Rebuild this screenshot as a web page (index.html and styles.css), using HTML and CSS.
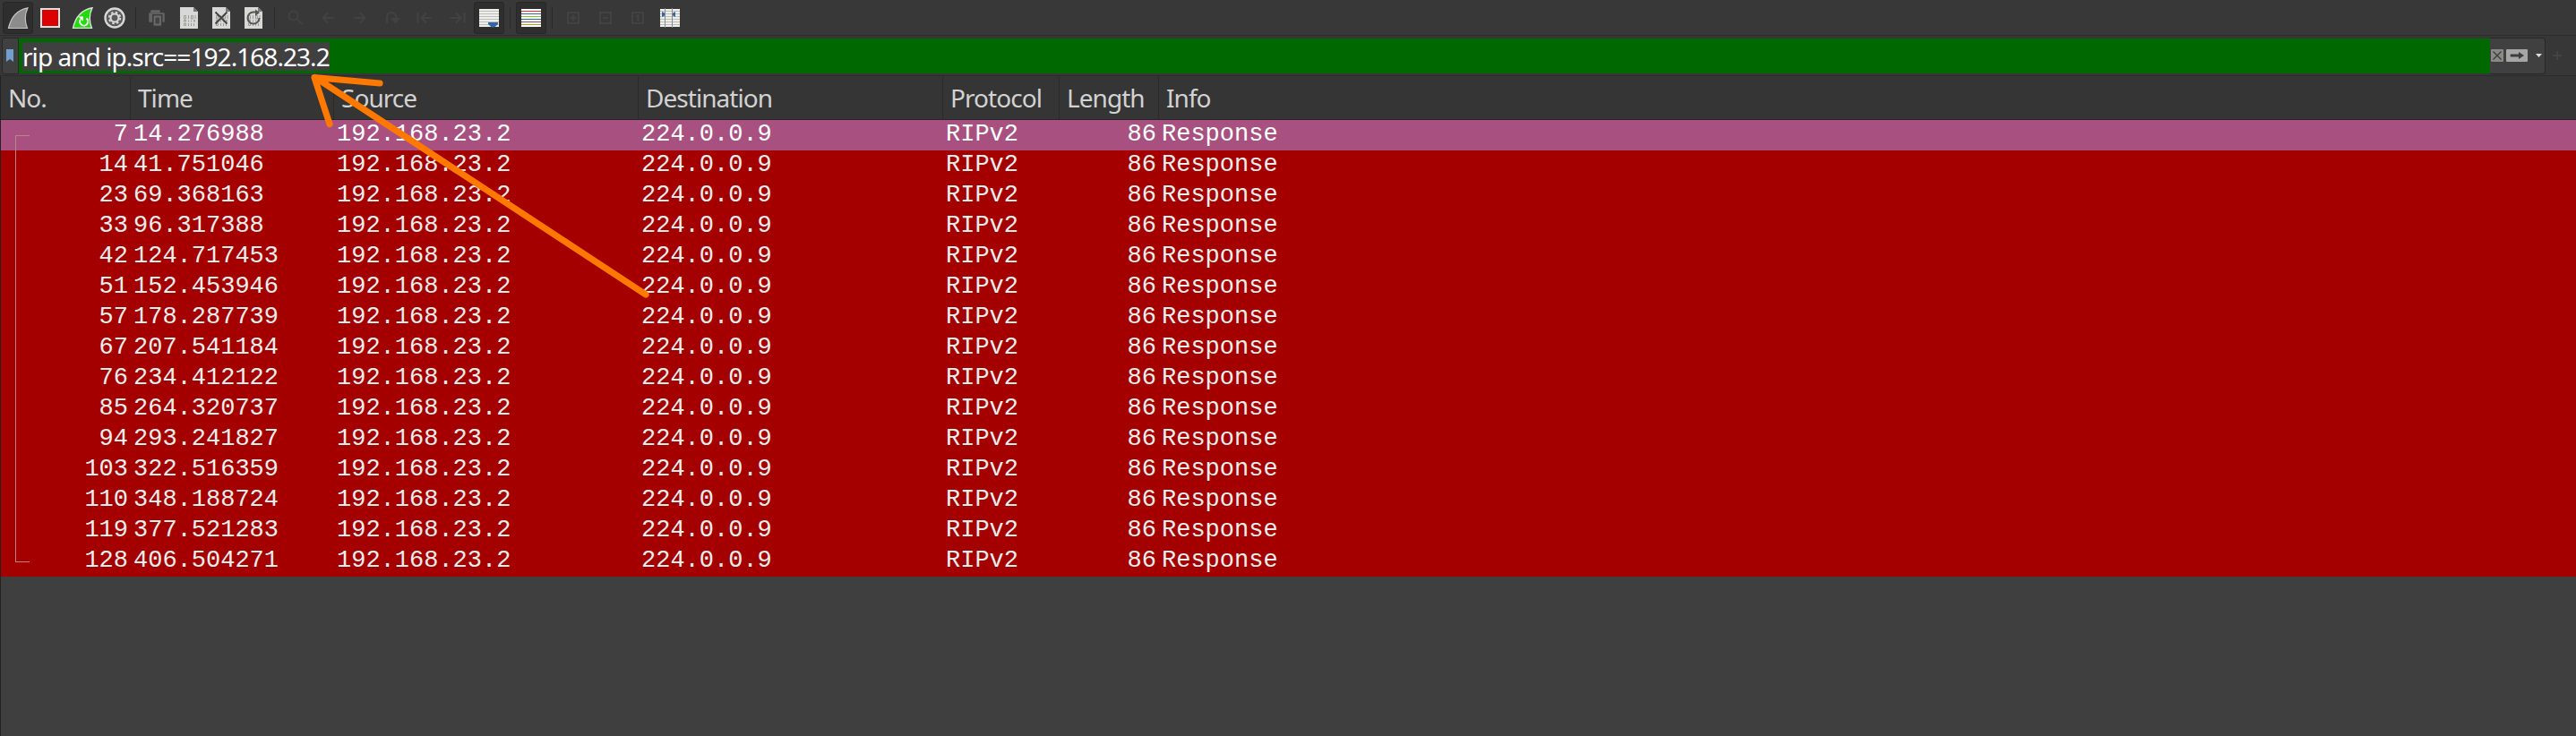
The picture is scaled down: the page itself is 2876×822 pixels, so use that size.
FILE: index.html
```
<!DOCTYPE html>
<html lang="en">
<head>
<meta charset="utf-8">
<title>Packet capture</title>
<link rel="stylesheet" href="styles.css">
</head>
<body>
<svg class="defs" width="0" height="0" aria-hidden="true">
  <symbol id="page" viewBox="0 0 24 24">
    <path d="M2 0H17L22 5V24H2Z" fill="#d8d8d6"/>
    <path d="M17 0V5H22Z" fill="#777"/>
    <g fill="none" stroke="#9b9b99" stroke-width="1">
      <path d="M6.500 9.500h2v3.500h-2zM14.500 9.500h2v3.500h-2zM6.500 14.500h2v1.500h-2zM6.500 18h2v2.500h-2zM17.500 14.500h1v1.500h-1z"/>
      <path d="M11.500 9v4M19 9v4M11.500 14.500v2M14.500 14.500v2M11.500 18v3M14.500 18v3M17.500 18v3"/>
    </g>
  </symbol>
  <symbol id="sheet" viewBox="0 0 24 24">
    <path d="M1 2H23V22H1Z" fill="#eeeeec"/>
    <path d="M1 4.500H23M1 7.500H23M1 10.500H23M1 13.500H23M1 16.500H23M1 19.500H23" stroke="#babdb6"/>
  </symbol>
</svg>
<div class="window">
  <div class="toolbar">
    <span class="btn on"><svg viewBox="0 0 24 24"><path d="M1.500 23.500C4 12 11 3 23 .8C19.500 8 19.500 16 22.500 23.500Z" fill="#8c8c8c" stroke="#c4c4c4" stroke-width="1.200"/></svg></span>
    <span class="btn"><svg viewBox="0 0 24 24"><path d="M1 1H23V23H1Z" fill="#e4e4e4"/><path d="M3 3H21V21H3Z" fill="#dc0000"/></svg></span>
    <span class="btn"><svg viewBox="0 0 24 24"><path d="M1.500 23.500C4 12 11 3 23 .8C19.500 8 19.500 16 22.500 23.500Z" fill="#1fdc0a" stroke="#dedede" stroke-width="1.400"/><path d="M16.500 12.500A4.500 4.500 0 1 1 10 13.500" fill="none" stroke="#fff" stroke-width="2"/><path d="M7.500 10.500H13V16Z" fill="#fff"/></svg></span>
    <span class="btn"><svg viewBox="0 0 24 24"><circle cx="12" cy="12" r="11.700" fill="#d8d8d8"/><circle cx="12" cy="12" r="9.300" fill="#5a5a5a"/><circle cx="12" cy="12" r="6.300" fill="none" stroke="#d8d8d8" stroke-width="1.800" stroke-dasharray="2.600 2.348"/><circle cx="12" cy="12" r="4.500" fill="none" stroke="#d8d8d8" stroke-width="2.200"/></svg></span>
    <span class="sep"></span>
    <span class="btn"><svg viewBox="0 0 24 24"><path d="M6 6V4H15V6M4 7H20V16H4Z" fill="#646464" stroke="#646464" stroke-width="1.500" stroke-linejoin="round"/><path d="M9 10H16.500V20H9Z" fill="#646464" stroke="#3b3b3b" stroke-width="4"/><path d="M9.500 10.500H16V19.500H9.500Z" fill="#444" stroke="#6c6c6c" stroke-width="1.800"/></svg></span>
    <span class="btn"><svg><use href="#page"/></svg></span>
    <span class="btn"><svg viewBox="0 0 24 24"><use href="#page"/><path d="M5.500 5.500L18.500 18.500M18.500 5.500L5.500 18.500" stroke="#444" stroke-width="2"/></svg></span>
    <span class="btn"><svg viewBox="0 0 24 24"><use href="#page"/><path d="M18.500 12A6.500 6.500 0 1 1 12 5.500H16" fill="none" stroke="#555" stroke-width="2"/><path d="M14 2.500L19 6L14 10Z" fill="#555"/></svg></span>
    <span class="sep"></span>
    <span class="btn dim"><svg viewBox="0 0 24 24"><circle cx="9.500" cy="9.500" r="5" /><path d="M13.500 13.500L19.500 19"/></svg></span>
    <span class="btn dim"><svg viewBox="0 0 24 24"><path d="M18.500 12H6.500M12 6.500L6.500 12L12 17.500"/></svg></span>
    <span class="btn dim"><svg viewBox="0 0 24 24"><path d="M5.500 12H17.500M12 6.500L17.500 12L12 17.500"/></svg></span>
    <span class="btn dim"><svg viewBox="0 0 24 24"><path d="M6 18V11A5 5 0 0 1 16 11V14"/><path class="solid" d="M12 13H19L15.500 17Z"/></svg></span>
    <span class="btn dim"><svg viewBox="0 0 24 24"><path d="M4.500 6V17.500M19.500 12H8.500M14 6.500L8.500 12L14 17.500"/></svg></span>
    <span class="btn dim"><svg viewBox="0 0 24 24"><path d="M20.500 6V17.500M4.500 12H16M11 6.500L16.500 12L11 17.500"/></svg></span>
    <span class="btn on"><svg viewBox="0 0 24 24"><use href="#sheet"/><path d="M11 17H22V19L18 22.500H15L11 19Z" fill="#3465a4"/></svg></span>
    <span class="sep"></span>
    <span class="btn on"><svg viewBox="0 0 24 24"><path d="M1 2H23V22H1Z" fill="#fff"/><path d="M1 4.500H23" stroke="#ef2929"/><path d="M1 7.500H23M1 13.500H23" stroke="#3465a4"/><path d="M1 10.500H23" stroke="#73d216"/><path d="M1 16.500H23" stroke="#75507b"/><path d="M1 19.500H23" stroke="#c4a000"/></svg></span>
    <span class="sep"></span>
    <span class="btn dim"><svg viewBox="0 0 24 24"><path d="M6 6H18V18H6ZM8.500 12H15.500M12 8.500V15.500"/></svg></span>
    <span class="btn dim"><svg viewBox="0 0 24 24"><path d="M6 6H18V18H6ZM9 12H15"/></svg></span>
    <span class="btn dim"><svg viewBox="0 0 24 24"><path d="M6 6H18V18H6ZM10 10L12.500 9V16"/></svg></span>
    <span class="btn"><svg viewBox="0 0 24 24"><use href="#sheet"/><path d="M3 5L7 7V9L3 11ZM18 5V11L14.500 9V7Z" fill="#3465a4"/><path d="M6.500 1V23M14.500 1V23" stroke="#888a85"/></svg></span>
  </div>

  <div class="filter">
    <div class="bookmark"><svg viewBox="0 0 8 14"><path d="M0 0H8V14L4 11L0 14Z" fill="#729fcf"/></svg></div>
    <div class="field"><span class="query">rip and ip.src==192.168.23.2</span></div>
    <div class="actions">
      <svg class="clear" viewBox="0 0 14 14"><rect width="14" height="14" rx="1" fill="#888a85"/><path d="M2.500 2.500L11.500 11.500M11.500 2.500L2.500 11.500" stroke="#3c3c3c" stroke-width="1.300"/></svg>
      <svg class="apply" viewBox="0 0 24 14"><rect width="24" height="14" rx="1" fill="#a6a6a6"/><path d="M5 5.500H14V3L20 7L14 11V8.500H5Q4 7 5 5.500Z" fill="#3c3c3c"/></svg>
      <svg class="drop" viewBox="0 0 7 4"><path d="M0 0H7L3.500 4Z" fill="#dededa"/></svg>
    </div>
    <svg class="plus" viewBox="0 0 10 10"><path d="M5 0V10M0 5H10" stroke="#484848" stroke-width="1.500"/></svg>
  </div>

  <div class="packets">
    <div class="row head">
      <span>No.</span><span>Time</span><span>Source</span><span>Destination</span><span>Protocol</span><span>Length</span><span>Info</span>
    </div>
    <div class="row selected"><span>7</span><span>14.276988</span><span>192.168.23.2</span><span>224.0.0.9</span><span>RIPv2</span><span>86</span><span>Response</span></div>
    <div class="row"><span>14</span><span>41.751046</span><span>192.168.23.2</span><span>224.0.0.9</span><span>RIPv2</span><span>86</span><span>Response</span></div>
    <div class="row"><span>23</span><span>69.368163</span><span>192.168.23.2</span><span>224.0.0.9</span><span>RIPv2</span><span>86</span><span>Response</span></div>
    <div class="row"><span>33</span><span>96.317388</span><span>192.168.23.2</span><span>224.0.0.9</span><span>RIPv2</span><span>86</span><span>Response</span></div>
    <div class="row"><span>42</span><span>124.717453</span><span>192.168.23.2</span><span>224.0.0.9</span><span>RIPv2</span><span>86</span><span>Response</span></div>
    <div class="row"><span>51</span><span>152.453946</span><span>192.168.23.2</span><span>224.0.0.9</span><span>RIPv2</span><span>86</span><span>Response</span></div>
    <div class="row"><span>57</span><span>178.287739</span><span>192.168.23.2</span><span>224.0.0.9</span><span>RIPv2</span><span>86</span><span>Response</span></div>
    <div class="row"><span>67</span><span>207.541184</span><span>192.168.23.2</span><span>224.0.0.9</span><span>RIPv2</span><span>86</span><span>Response</span></div>
    <div class="row"><span>76</span><span>234.412122</span><span>192.168.23.2</span><span>224.0.0.9</span><span>RIPv2</span><span>86</span><span>Response</span></div>
    <div class="row"><span>85</span><span>264.320737</span><span>192.168.23.2</span><span>224.0.0.9</span><span>RIPv2</span><span>86</span><span>Response</span></div>
    <div class="row"><span>94</span><span>293.241827</span><span>192.168.23.2</span><span>224.0.0.9</span><span>RIPv2</span><span>86</span><span>Response</span></div>
    <div class="row"><span>103</span><span>322.516359</span><span>192.168.23.2</span><span>224.0.0.9</span><span>RIPv2</span><span>86</span><span>Response</span></div>
    <div class="row"><span>110</span><span>348.188724</span><span>192.168.23.2</span><span>224.0.0.9</span><span>RIPv2</span><span>86</span><span>Response</span></div>
    <div class="row"><span>119</span><span>377.521283</span><span>192.168.23.2</span><span>224.0.0.9</span><span>RIPv2</span><span>86</span><span>Response</span></div>
    <div class="row"><span>128</span><span>406.504271</span><span>192.168.23.2</span><span>224.0.0.9</span><span>RIPv2</span><span>86</span><span>Response</span></div>
    <div class="related"></div>
  </div>
  <svg class="arrow" viewBox="0 0 400 260"><path d="M22 6.500L391 249M94 13L21 6.500L38 58.500"/></svg>
</div>
</body>
</html>
```
FILE: styles.css
```
body {
  margin: 0;
  background: #3f3f3f;
}

.defs {
  position: absolute;
}

.window {
  position: relative;
  display: flex;
  flex-direction: column;
  width: 2876px;
  height: 822px;
  overflow: hidden;
  font-family: "Noto Sans", "Open Sans", sans-serif;
}

/* Toolbar */
.toolbar {
  display: flex;
  align-items: center;
  box-sizing: border-box;
  height: 40px;
  padding-left: 2px;
  background: #383838;
  border-bottom: 1px solid #2c2c2c;
}

.btn {
  display: flex;
  align-items: center;
  justify-content: center;
  box-sizing: border-box;
  width: 34px;
  height: 36px;
  margin: 0 1px;
  border: 1px solid transparent;
  border-radius: 3px;
}

.btn svg {
  width: 24px;
  height: 24px;
}

.btn.on {
  background: #2e2e2e;
  border-color: #272727;
}

.btn.dim svg {
  fill: none;
  stroke: #424242;
  stroke-width: 2;
}

.btn.dim .solid {
  fill: #424242;
}

.sep {
  width: 1px;
  height: 24px;
  margin: 0 5px;
  background: #2a2a2a;
}

/* Display filter */
.filter {
  display: flex;
  align-items: center;
  box-sizing: border-box;
  height: 45px;
  padding: 2px 0 2px 2px;
  background: #373737;
  border-bottom: 1px solid #2b2b2b;
}

.bookmark {
  display: flex;
  align-items: center;
  justify-content: center;
  box-sizing: border-box;
  width: 19px;
  height: 41px;
  padding-right: 1px;
  background: #404040;
  border: 1px solid #282828;
  border-radius: 3px 0 0 3px;
}

.bookmark svg {
  width: 8px;
  height: 14px;
}

.field {
  box-sizing: border-box;
  width: 2759px;
  height: 39px;
  padding: 4px 0 0 4px;
  background: #006800;
}

.query {
  display: block;
  box-sizing: border-box;
  width: 343px;
  height: 32px;
  background: #404040;
  color: #fff;
  font-size: 28px;
  line-height: 32px;
  letter-spacing: -0.95px;
  white-space: nowrap;
}

.actions {
  display: flex;
  align-items: center;
  box-sizing: border-box;
  width: 62px;
  height: 41px;
  padding-left: 1px;
  background: #404040;
  border: 1px solid #282828;
  border-left: 0;
  border-radius: 0 4px 4px 0;
}

.clear {
  width: 14px;
  height: 14px;
}

.apply {
  width: 24px;
  height: 14px;
  margin: 0 9px 0 3px;
}

.drop {
  width: 7px;
  height: 4px;
}

.plus {
  width: 10px;
  height: 10px;
  margin-left: 8px;
}

/* Packet list */
.packets {
  position: relative;
  flex: 1;
  border-left: 1px solid #222;
}

.row {
  display: grid;
  grid-template-columns: 145px 227px 340px 340px 130px 111px 1fr;
  height: 34px;
  background: #a40000;
  color: #eeeeec;
  font: 27px/32px "Liberation Mono", monospace;
}

.row > span {
  padding-left: 3px;
}

.row > span:first-child,
.row > span:nth-child(6) {
  padding: 0 3px 0 0;
  text-align: right;
}

.row.selected {
  background: #a8507f;
  color: #fff;
}

.row.head {
  box-sizing: border-box;
  height: 49px;
  background: #353535;
  border-bottom: 1px solid #262626;
  color: #d2d2d2;
  font: 28px/48px "Noto Sans", "Open Sans", sans-serif;
  letter-spacing: -0.95px;
}

.row.head > span,
.row.head > span:nth-child(6) {
  padding: 0 0 0 8px;
  border-right: 1px solid #2a2a2a;
  text-align: left;
}

.row.head > span:last-child {
  border-right: 0;
}

/* Bracket joining packets of one conversation */
.related {
  position: absolute;
  left: 16px;
  top: 66px;
  width: 15px;
  height: 475px;
  border: 1px solid #b9858a;
  border-right: 0;
}

/* Annotation over the capture */
.arrow {
  position: absolute;
  left: 330px;
  top: 80px;
  width: 400px;
  height: 260px;
  fill: none;
  stroke: #ff7800;
  stroke-width: 7.2;
  stroke-linecap: round;
  stroke-linejoin: round;
}
```
